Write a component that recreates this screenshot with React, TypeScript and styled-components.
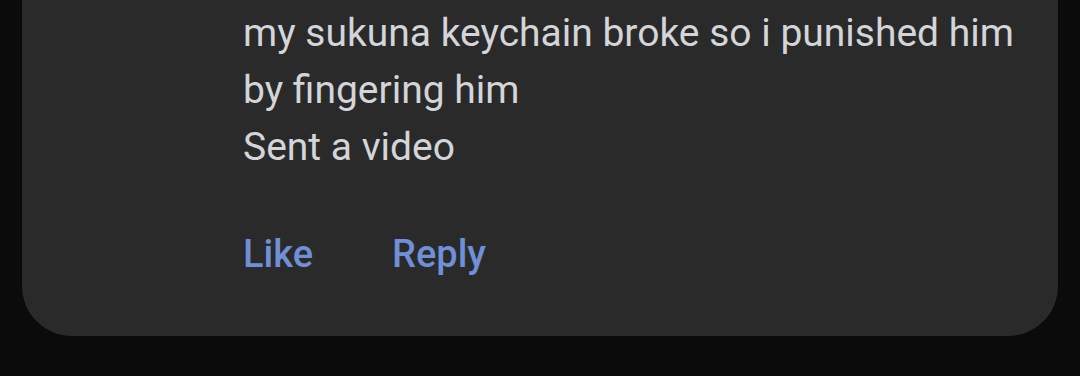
import React from "react";
import styled, { createGlobalStyle } from "styled-components";

const Global = createGlobalStyle`
  html, body {
    margin: 0;
    padding: 0;
    background: #0b0b0b;
    font-family: Roboto, "Liberation Sans", sans-serif;
  }
`;

const Page = styled.div`
  width: 1080px;
  height: 376px;
  padding: 0 22px;
  box-sizing: border-box;
  overflow: hidden;
`;

const Card = styled.div`
  height: 336px;
  background: #2a2a2a;
  border-radius: 0 0 50px 50px;
  box-sizing: border-box;
  padding: 5px 0 0 221px;
`;

const Body = styled.div`
  color: #d3d5d9;
  font-size: 39px;
  line-height: 57px;
  font-weight: 400;
  width: 790px;
`;

const Actions = styled.div`
  display: flex;
  gap: 79px;
  margin-top: 58px;
`;

const Action = styled.span`
  color: #6f8fd6;
  font-size: 38px;
  font-weight: 500;
  line-height: 40px;
`;

export default function App() {
  return (
    <Page>
      <Global />
      <Card>
        <Body>
          <div>my sukuna keychain broke so i punished him by fingering him</div>
          <div>Sent a video</div>
        </Body>
        <Actions>
          <Action>Like</Action>
          <Action>Reply</Action>
        </Actions>
      </Card>
    </Page>
  );
}
